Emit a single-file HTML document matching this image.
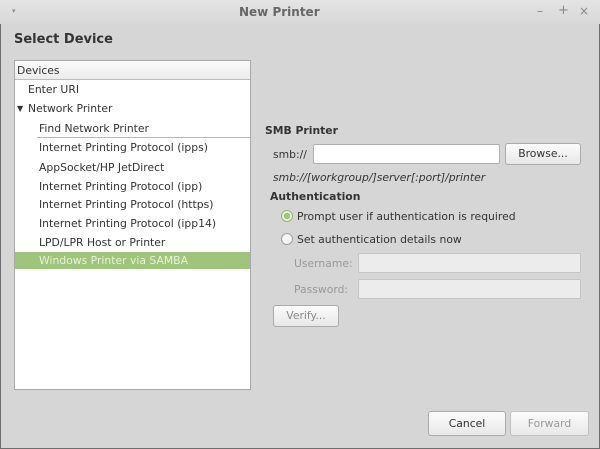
<!DOCTYPE html>
<html><head><style>
*{margin:0;padding:0;box-sizing:border-box}
body{width:600px;height:449px;background:#d6d6d6;font-family:"DejaVu Sans","Liberation Sans",sans-serif;font-size:10.8px;color:#333;position:relative;overflow:hidden}
.win{position:absolute;left:0;top:0;width:600px;height:449px;border:1px solid #6e6e6e;border-radius:4px 4px 0 0}
.title{position:absolute;left:0;top:0;width:600px;height:24px;background:linear-gradient(#e4e4e4,#d8d8d8);}
.t{position:absolute;white-space:nowrap}
.list{position:absolute;left:14px;top:60px;width:237px;height:330px;background:#fff;border:1px solid #a8a8a8}
.hdr{position:absolute;left:0;top:0;width:235px;height:19px;background:linear-gradient(#fafafa,#ececec);border-bottom:1px solid #bcbcbc}
.btn{position:absolute;border:1px solid #aaa;border-radius:3px;background:linear-gradient(#fbfbfb,#e8e8e8);text-align:center}
.ent{position:absolute;border:1px solid #b0b0b0;border-radius:2px;background:#fff}
.dis{background:#ececec;border-color:#c4c4c4}
.radio{position:absolute;width:12px;height:12px;border-radius:50%;border:1px solid #a0a0a0;background:#f6f6f6}
</style></head><body>
<div class="win"></div>
<div class="title"></div>
<div class="t" style="left:12px;top:7px;font-size:7px;color:#888">▾</div>
<div class="t" style="left:239px;top:5px;font-weight:bold;font-size:12px;color:#666">New Printer</div>
<div class="t" style="left:537px;top:4px;color:#888;font-size:12px">–</div>
<div class="t" style="left:558px;top:3px;color:#888;font-size:13px">+</div>
<div class="t" style="left:579px;top:4px;color:#888;font-size:12px">×</div>
<div class="t" style="left:14px;top:32px;font-weight:bold;font-size:13px">Select Device</div>
<div class="list">
<div class="hdr"><span class="t" style="left:2px;top:3px">Devices</span></div>
<div class="t" style="left:13px;top:22px">Enter URI</div>
<div class="t" style="left:2px;font-size:8px;top:43px">▼</div>
<div class="t" style="left:13px;top:41px">Network Printer</div>
<div class="t" style="left:24px;top:61px">Find Network Printer</div>
<div style="position:absolute;left:22px;top:76px;width:213px;height:1px;background:#b8b8b8"></div>
<div class="t" style="left:24px;top:80px">Internet Printing Protocol (ipps)</div>
<div class="t" style="left:24px;top:100px">AppSocket/HP JetDirect</div>
<div class="t" style="left:24px;top:119px">Internet Printing Protocol (ipp)</div>
<div class="t" style="left:24px;top:137px">Internet Printing Protocol (https)</div>
<div class="t" style="left:24px;top:156px">Internet Printing Protocol (ipp14)</div>
<div class="t" style="left:24px;top:175px">LPD/LPR Host or Printer</div>
<div style="position:absolute;left:0;top:191px;width:235px;height:17px;background:#9fc47b"></div>
<div class="t" style="left:24px;top:193px;color:#e8f2dc">Windows Printer via SAMBA</div>
</div>
<div class="t" style="left:265px;top:124px;font-weight:bold">SMB Printer</div>
<div class="t" style="left:273px;top:148px">smb://</div>
<div class="ent" style="left:313px;top:144px;width:187px;height:20px"></div>
<div class="btn" style="left:505px;top:143px;width:76px;height:22px;line-height:20px">Browse...</div>
<div class="t" style="left:273px;top:171px;font-style:italic">smb://[workgroup/]server[:port]/printer</div>
<div class="t" style="left:270px;top:190px;font-weight:bold">Authentication</div>
<div class="radio" style="left:281px;top:210px;border-color:#8fb56a;background:radial-gradient(circle,#9fc47b 0 3px,#eef5e6 3.5px)"></div>
<div class="t" style="left:297px;top:210px">Prompt user if authentication is required</div>
<div class="radio" style="left:281px;top:233px"></div>
<div class="t" style="left:297px;top:233px">Set authentication details now</div>
<div class="t" style="left:294px;top:257px;color:#999">Username:</div>
<div class="ent dis" style="left:358px;top:253px;width:223px;height:20px"></div>
<div class="t" style="left:294px;top:283px;color:#999">Password:</div>
<div class="ent dis" style="left:358px;top:279px;width:223px;height:20px"></div>
<div class="btn" style="left:273px;top:305px;width:66px;height:22px;line-height:20px;color:#888">Verify...</div>
<div class="btn" style="left:428px;top:411px;width:78px;height:25px;line-height:23px">Cancel</div>
<div class="btn" style="left:510px;top:411px;width:79px;height:25px;line-height:23px;color:#999;border-color:#c0c0c0">Forward</div>
</body></html>
